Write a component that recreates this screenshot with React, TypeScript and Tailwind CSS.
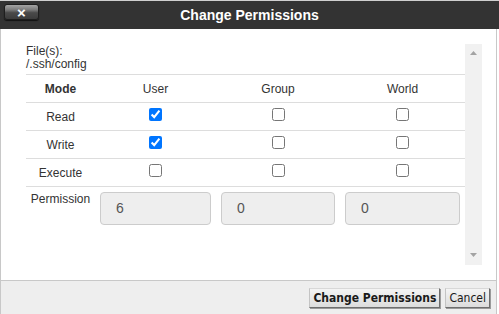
export default function App() {
  const Check = ({ on }: { on?: boolean }) => (
    <input
      type="checkbox"
      defaultChecked={on}
      className="m-0 mb-[4px] w-[13px] h-[13px]"
    />
  );
  const btn =
    "h-[20px] px-[3px] text-[12px] text-[#1a1a1a] font-['DejaVu_Sans_Condensed','DejaVu_Sans',sans-serif] border border-t-[#d8d8d8] border-l-[#c4c4c4] border-r-[#6e6e6e] border-b-[#6e6e6e] bg-[linear-gradient(#f4f4f4,#dcdcdc)] shadow-[1px_1px_0_#9a9a9a] leading-none";
  return (
    <div className="w-[499px] h-[314px] bg-white overflow-hidden flex flex-col font-['Liberation_Sans',Arial,sans-serif] text-[12px] text-[#333]">
      {/* title bar */}
      <div className="h-[29px] border-t border-[#cfcfcf] bg-[#333] grid grid-cols-[1fr_auto_1fr] items-start">
        <div className="pl-[4px] pt-[3px]">
          <div className="w-[35px] h-[16px] rounded-[3px] border border-[#1e1e1e] bg-[linear-gradient(#a4a4a4_0%,#7a7a7a_35%,#4a4a4a_55%,#3c3c3c_100%)] shadow-[0_1px_1px_#111] flex items-center justify-center text-white font-bold text-[15px] leading-none">
            ×
          </div>
        </div>
        <div className="h-[28px] flex items-center text-white font-bold text-[14px]">
          Change Permissions
        </div>
        <div />
      </div>

      {/* body */}
      <div className="w-[497px] flex-1 flex flex-col border-l border-r border-[#c8c8c8]">
        <div className="h-[251px] pt-[15px] pl-[25px] flex">
          <div className="w-[439px] h-[221px]">
            <div className="pt-[1px] leading-[13px]">
              <div>File(s):</div>
              <div>/.ssh/config</div>
            </div>
            <div className="mt-[3px]">
              <div className="grid grid-cols-[69px_121px_124px_125px] h-[28px] border-t border-[#ddd] items-center text-center">
                <div className="font-bold">Mode</div>
                <div>User</div>
                <div>Group</div>
                <div>World</div>
              </div>
              <div className="grid grid-cols-[69px_121px_124px_125px] h-[28px] border-t border-[#ddd] items-center text-center">
                <div>Read</div>
                <div className="flex justify-center items-center"><Check on /></div>
                <div className="flex justify-center items-center"><Check /></div>
                <div className="flex justify-center items-center"><Check /></div>
              </div>
              <div className="grid grid-cols-[69px_121px_124px_125px] h-[28px] border-t border-[#ddd] items-center text-center">
                <div>Write</div>
                <div className="flex justify-center items-center"><Check on /></div>
                <div className="flex justify-center items-center"><Check /></div>
                <div className="flex justify-center items-center"><Check /></div>
              </div>
              <div className="grid grid-cols-[69px_121px_124px_125px] h-[28px] border-t border-[#ddd] items-center text-center">
                <div>Execute</div>
                <div className="flex justify-center items-center"><Check /></div>
                <div className="flex justify-center items-center"><Check /></div>
                <div className="flex justify-center items-center"><Check /></div>
              </div>
              <div className="grid grid-cols-[69px_121px_124px_125px] border-t border-[#ddd] pt-[5px] items-start">
                <div className="text-center leading-[14px]">Permission</div>
                {["6", "0", "0"].map((v, i) => (
                  <div key={i} className="px-[5px]">
                    <div className="h-[33px] bg-[#eee] border border-[#ccc] rounded-[4px] flex items-center pl-[15px] text-[14px] text-[#555]">
                      {v}
                    </div>
                  </div>
                ))}
              </div>
            </div>
          </div>
          {/* scrollbar */}
          <div className="w-[17px] h-[221px] bg-[#f1f1f1] flex flex-col justify-between items-center pt-[7px] pb-[8px]">
            <svg width="7" height="4" viewBox="0 0 7 4">
              <polygon points="3.5,0 7,4 0,4" fill="#a3a3a3" />
            </svg>
            <svg width="7" height="4" viewBox="0 0 7 4">
              <polygon points="0,0 7,0 3.5,4" fill="#a3a3a3" />
            </svg>
          </div>
        </div>

        {/* footer */}
        <div className="flex-1 border-t border-[#c8c8c8] bg-[#eee] flex items-center justify-end pr-[6px] gap-[5px]">
          <button className={btn + " font-bold"}>Change Permissions</button>
          <button className={btn}>Cancel</button>
        </div>
      </div>
    </div>
  );
}
